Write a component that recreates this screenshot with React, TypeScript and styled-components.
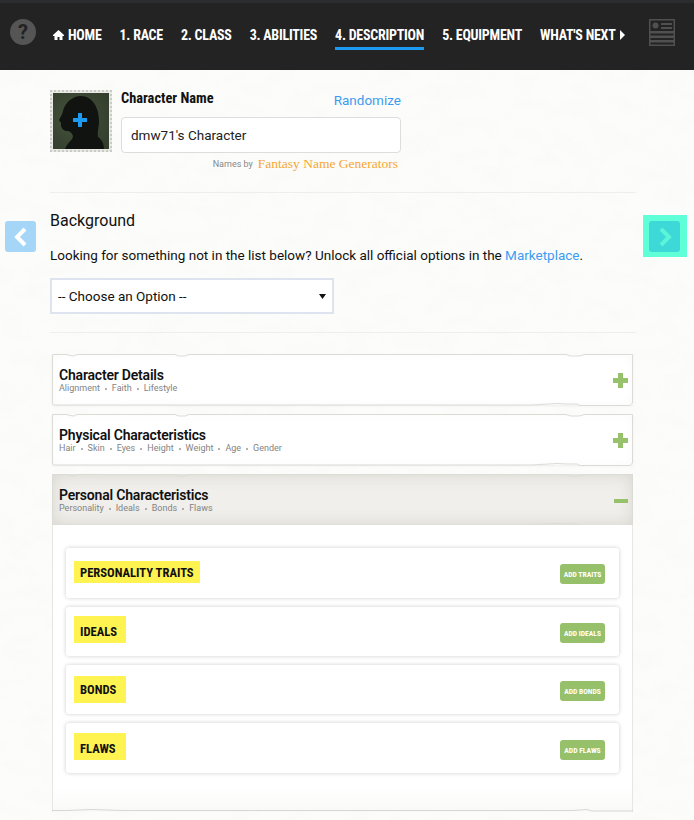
import * as React from "react"
import styled, { createGlobalStyle } from "styled-components"

const GlobalStyle = createGlobalStyle`
    html, body {
        margin: 0;
        padding: 0;
        background: #fcfcfa;
        font-family: Roboto, "Liberation Sans", sans-serif;
        color: #111;
    }
`

const Page = styled.div`
    width: 694px;
    height: 820px;
    overflow: hidden;
    position: relative;
    background: #fcfcfa;
`

const PaperTexture = styled.svg`
    position: absolute;
    left: 0;
    top: 0;
`

const Header = styled.header`
    position: relative;
    height: 70px;
    box-sizing: border-box;
    background: #232323;
    border-top: 3px solid #2b2c2d;
    display: flex;
    align-items: flex-start;
    padding: 16px 0 0 10px;
`

const HelpIcon = styled.div`
    width: 26px;
    height: 26px;
    border-radius: 50%;
    background: #555;
    color: #222;
    font: 700 20px/26px Roboto, sans-serif;
    text-align: center;
    margin-right: 17px;
`

const NavList = styled.nav`
    display: flex;
    gap: 18px;
`

const NavItem = styled.div<{ $active?: boolean }>`
    height: 31px;
    box-sizing: border-box;
    padding-top: 7px;
    display: flex;
    gap: 4px;
    align-items: flex-start;
    color: #fff;
    font: 700 14px/18px "Roboto", sans-serif;
    font-stretch: 75%;
    letter-spacing: -.25px;
    white-space: nowrap;
    border-bottom: 3px solid ${p => (p.$active ? "#1b9af0" : "transparent")};
`

const SheetIcon = styled.svg`
    margin: 0 0 0 23px;
`

const Main = styled.main`
    position: relative;
    padding: 20px 58px 0 50px;
`

const NameRow = styled.section`
    display: flex;
    gap: 9px;
    padding-bottom: 17px;
`

const Portrait = styled.div`
    width: 62px;
    height: 62px;
    box-sizing: border-box;
    border: 2px dotted #c9c9c6;
    background: #e9e9e6;
    padding: 1px;
    position: relative;
    flex: none;
`

const PortraitPlus = styled.svg`
    position: absolute;
    left: 21px;
    top: 21px;
`

const NameColumn = styled.div`
    width: 280px;
`

const NameLabelRow = styled.div`
    display: flex;
    justify-content: space-between;
    align-items: flex-start;
    height: 26px;
    line-height: 18px;
`

const NameLabel = styled.label`
    font-weight: 700;
    font-size: 14.4px;
    font-stretch: 75%;
`

const RandomizeLink = styled.a`
    color: #3d9cf2;
    font-size: 13.5px;
    padding-top: 1px;
    text-decoration: none;
`

const Link = styled.a`
    color: #3d9cf2;
    font-size: 13.5px;
    text-decoration: none;
`

const NameInput = styled.div`
    height: 36px;
    margin-top: 1px;
    box-sizing: border-box;
    border: 1px solid #ddd;
    border-radius: 4px;
    background: #fff;
    padding-left: 9px;
    font-size: 13.5px;
    line-height: 34px;
    color: #222;
`

const Credit = styled.div`
    display: flex;
    align-items: center;
    justify-content: flex-end;
    gap: 5px;
    height: 22px;
    padding-right: 3px;
    color: #888;
    font-size: 9px;
`

const CreditLogo = styled.span`
    font: 13.5px "Liberation Serif", serif;
    color: #f6a733;
`

const Divider = styled.hr`
    position: relative;
    border: 0;
    height: 1px;
    background: #eeeeea;
    margin: 0;
`

const Section = styled.section`
    position: relative;
    padding-top: 18px;
    padding-bottom: 18px;
`

const Heading = styled.h2`
    margin: 0;
    font-weight: 400;
    font-size: 16px;
    line-height: 20px;
`

const Paragraph = styled.p`
    margin: 14px 0 13px;
    font-size: 13.5px;
    line-height: 20px;
    white-space: nowrap;
`

const SelectBox = styled.div`
    width: 284px;
    height: 36px;
    box-sizing: border-box;
    border: 2px solid #dde4f0;
    background: #fff;
    display: flex;
    align-items: center;
    justify-content: space-between;
    padding: 0 6px 0 6px;
    font-size: 13.5px;
`

const SideButton = styled.div<{ $color: string }>`
    width: 31px;
    height: 31px;
    background: ${p => p.$color};
    border-radius: 3px;
    display: flex;
    align-items: center;
    justify-content: center;
`

const SideLeft = styled.div`
    position: absolute;
    left: 5px;
    top: 151px;
`

const SideRight = styled.div`
    position: absolute;
    left: 643px;
    top: 145px;
    padding: 6px 7px 5px 6px;
    background: #5fffd8;
`

const Accordion = styled.div`
    position: relative;
    margin: 21px 3px 0 2px;
    display: flex;
    flex-direction: column;
    gap: 9px;
`

const PanelHead = styled.div<{ $open?: boolean }>`
    position: relative;
    height: 51px;
    box-sizing: border-box;
    padding: 13px 7px 0;
    background: ${p => (p.$open ? "#f0efeb" : "#fff")};
    box-shadow: ${p => (p.$open ? "inset 0 0 16px rgba(120,115,100,.22)" : "inset 0 0 8px rgba(120,115,100,.05), 0 1px 2px rgba(0,0,0,.06)")};
`

const TornEdge = styled.svg`
    position: absolute;
    left: 0;
    top: 0;
    pointer-events: none;
`

const PanelTitle = styled.div`
    font-weight: 600;
    font-size: 14px;
    letter-spacing: -.2px;
    line-height: 16px;
    color: #111;
`

const PanelSub = styled.div`
    display: flex;
    align-items: center;
    gap: 5px;
    font-size: 9px;
    line-height: 11px;
    color: #838383;
`

const Dot = styled.i`
    width: 2px;
    height: 2px;
    border-radius: 50%;
    background: #999;
`

const Toggle = styled.svg`
    position: absolute;
    right: 5px;
    top: 19px;
`

const PanelBody = styled.div`
    position: relative;
    height: 287px;
    box-sizing: border-box;
    background: linear-gradient(#fff 262px, #f9f9f8);
    border-left: 1px solid #e6e6e2;
    border-right: 1px solid #e6e6e2;
    margin-top: -9px;
    padding: 23px 13px 0;
    display: flex;
    flex-direction: column;
    gap: 9px;
`

const BodyEdge = styled.svg`
    position: absolute;
    left: -1px;
    bottom: 0;
`

const TraitCard = styled.div<{ $height: number }>`
    height: ${p => p.$height}px;
    box-sizing: border-box;
    background: #fff;
    border-radius: 3px;
    box-shadow: 0 0 4px rgba(0, 0, 0, .2);
    display: flex;
    justify-content: space-between;
    padding: 0 14px 0 8px;
`

const TraitLabel = styled.span<{ $height: number; $top: number; $line: number }>`
    height: ${p => p.$height}px;
    line-height: ${p => p.$line}px;
    margin-top: ${p => p.$top}px;
    min-width: 40px;
    padding: 0 6px;
    background: #fff352;
    font-weight: 700;
    font-size: 12.6px;
    font-stretch: 75%;
    color: #111;
`

const AddButton = styled.button<{ $top: number }>`
    width: 45px;
    height: 20px;
    margin-top: ${p => p.$top}px;
    padding: 0;
    border: 0;
    border-radius: 3px;
    background: #97c06b;
    color: #fff;
    font: 700 7.6px Roboto, sans-serif;
    font-stretch: 75%;
    white-space: nowrap;
`

const NAV = ["1. RACE", "2. CLASS", "3. ABILITIES", "4. DESCRIPTION", "5. EQUIPMENT"]

const TORN_PATH = "M.5 .5H15L18 1.5 22 2 25 .5H123L127 2 133 2 137 .5H514L519 2 527 2 533 .5H580.5V49L578 51.5H528L525 50H515L505 49.5 480 51H2L.5 50Z"

const Edge = () => (
    <TornEdge width="581" height="52" viewBox="0 0 581 52">
        <path d={TORN_PATH} fill="none" stroke="#dcdbd6" strokeWidth="1" />
    </TornEdge>
)

const PANELS = [
    { title: "Character Details", sub: ["Alignment", "Faith", "Lifestyle"] },
    { title: "Physical Characteristics", sub: ["Hair", "Skin", "Eyes", "Height", "Weight", "Age", "Gender"] },
]

const TRAITS = [
    { label: "PERSONALITY TRAITS", action: "ADD TRAITS", height: 50, labelH: 22, line: 23, labelTop: 13, btnTop: 16 },
    { label: "IDEALS", action: "ADD IDEALS", height: 49, labelH: 27, line: 31, labelTop: 9, btnTop: 16 },
    { label: "BONDS", action: "ADD BONDS", height: 49, labelH: 27, line: 28, labelTop: 11, btnTop: 16 },
    { label: "FLAWS", action: "ADD FLAWS", height: 50, labelH: 27, line: 31, labelTop: 10, btnTop: 17 },
]

const Chevron = ({ dir, color }: { dir: "left" | "right"; color: string }) => (
    <svg width="14" height="20" viewBox="0 0 14 20">
        <path d={dir === "left" ? "M11 2 3 10l8 8" : "M3 2l8 8-8 8"} fill="none" stroke={color} strokeWidth="4" />
    </svg>
)

const Plus = () => (
    <Toggle width="15" height="15" viewBox="0 0 15 15">
        <path d="M5 0h5v5h5v5h-5v5H5v-5H0V5h5z" fill="#97c26b" />
    </Toggle>
)

const Minus = () => (
    <Toggle width="15" height="15" viewBox="0 0 15 15">
        <path d="M1 6h14v4H1z" fill="#97c26b" />
    </Toggle>
)

const SubLine = ({ items }: { items: string[] }) => (
    <PanelSub>
        {items.map((s, i) => (
            <React.Fragment key={s}>
                {i > 0 && <Dot />}
                {s}
            </React.Fragment>
        ))}
    </PanelSub>
)

export default function App() {
    return (
        <Page>
            <GlobalStyle />
            <PaperTexture width="694" height="820">
                <filter id="paper">
                    <feTurbulence type="fractalNoise" baseFrequency="0.035 0.06" numOctaves="5" seed="7" />
                    <feColorMatrix values="0 0 0 0 0.5  0 0 0 0 0.5  0 0 0 0 0.47  0.5 0 0 0 -0.2" />
                </filter>
                <rect width="694" height="820" filter="url(#paper)" opacity="0.14" />
            </PaperTexture>
            <Header>
                <HelpIcon>?</HelpIcon>
                <NavList>
                    <NavItem>
                        <svg width="11" height="18" viewBox="0 0 11 18">
                            <path d="M5.5 4 0 9v1h1.5v4h3v-3h2v3h3v-4H11V9z" fill="#fff" />
                        </svg>
                        HOME
                    </NavItem>
                    {NAV.map(n => <NavItem key={n} $active={n.startsWith("4")}>{n}</NavItem>)}
                    <NavItem>
                        WHAT'S NEXT
                        <svg width="6" height="18" viewBox="0 0 6 18"><path d="M0 4l5 5-5 5z" fill="#fff" /></svg>
                    </NavItem>
                </NavList>
                <SheetIcon width="26" height="27" viewBox="0 0 26 27">
                    <path d="M0 0h26v27H0zM1.5 1.5v24h23v-24z" fill="#505050" />
                    <circle cx="6.5" cy="6.5" r="3" fill="#505050" />
                    <path d="M12 4h11v2H12zM12 8h11v2H12zM1 12h24v2.5H1zM1 16.500h24v2.500H1zM1 21h24v2.500H1z" fill="#505050" />
                </SheetIcon>
            </Header>
            <Main>
                <NameRow>
                    <Portrait>
                        <svg width="56" height="56" viewBox="0 0 56 56" style={{ display: "block" }}>
                            <defs>
                                <radialGradient id="portraitBg" cx=".4" cy=".45" r=".75">
                                    <stop offset="0" stopColor="#45533d" />
                                    <stop offset="1" stopColor="#323d2b" />
                                </radialGradient>
                            </defs>
                            <rect width="56" height="56" fill="url(#portraitBg)" />
                            <path d="M28 3C19 3 12 10 10 18 9 22 7 25 6 27 7 29 8 29 8 30L8 33C9 36 11 38 14 38 17 38 19 40 20 43 20 47 14 50 12 56H51C51 50 48 46 45 44 44 40 46 34 46 28 46 14 39 3 28 3Z" fill="#10130f" />
                        </svg>
                        <PortraitPlus width="14" height="14" viewBox="0 0 14 14">
                            <path d="M5 0h4v5h5v4H9v5H5V9H0V5h5z" fill="#1b9af0" />
                        </PortraitPlus>
                    </Portrait>
                    <NameColumn>
                        <NameLabelRow>
                            <NameLabel>Character Name</NameLabel>
                            <RandomizeLink>Randomize</RandomizeLink>
                        </NameLabelRow>
                        <NameInput>dmw71's Character</NameInput>
                        <Credit>Names by <CreditLogo>Fantasy Name Generators</CreditLogo></Credit>
                    </NameColumn>
                </NameRow>
                <Divider />
                <Section>
                    <Heading>Background</Heading>
                    <Paragraph>Looking for something not in the list below? Unlock all official options in the <Link>Marketplace</Link>.</Paragraph>
                    <SelectBox>
                        -- Choose an Option --
                        <svg width="7" height="5" viewBox="0 0 7 5"><path d="M0 0h7L3.500 5z" fill="#111" /></svg>
                    </SelectBox>
                </Section>
                <Divider />
                <SideLeft><SideButton $color="#a5d5f7"><Chevron dir="left" color="#fff" /></SideButton></SideLeft>
                <SideRight><SideButton $color="#3dd8d8"><Chevron dir="right" color="#5cf5d8" /></SideButton></SideRight>
                <Accordion>
                    {PANELS.map(p => (
                        <PanelHead key={p.title}>
                            <PanelTitle>{p.title}</PanelTitle>
                            <SubLine items={p.sub} />
                            <Plus />
                            <Edge />
                        </PanelHead>
                    ))}
                    <PanelHead $open>
                        <PanelTitle>Personal Characteristics</PanelTitle>
                        <SubLine items={["Personality", "Ideals", "Bonds", "Flaws"]} />
                        <Minus />
                        <Edge />
                    </PanelHead>
                    <PanelBody>
                        {TRAITS.map(t => (
                            <TraitCard key={t.label} $height={t.height}>
                                <TraitLabel $height={t.labelH} $line={t.line} $top={t.labelTop}>{t.label}</TraitLabel>
                                <AddButton $top={t.btnTop}>{t.action}</AddButton>
                            </TraitCard>
                        ))}
                        <BodyEdge width="581" height="4" viewBox="0 0 581 4">
                            <path d="M0 2.500H15L40 1.500 70 2.500H520L535 1.500 540 3H581" fill="none" stroke="#d8d7d2" />
                        </BodyEdge>
                    </PanelBody>
                </Accordion>
            </Main>
        </Page>
    )
}
